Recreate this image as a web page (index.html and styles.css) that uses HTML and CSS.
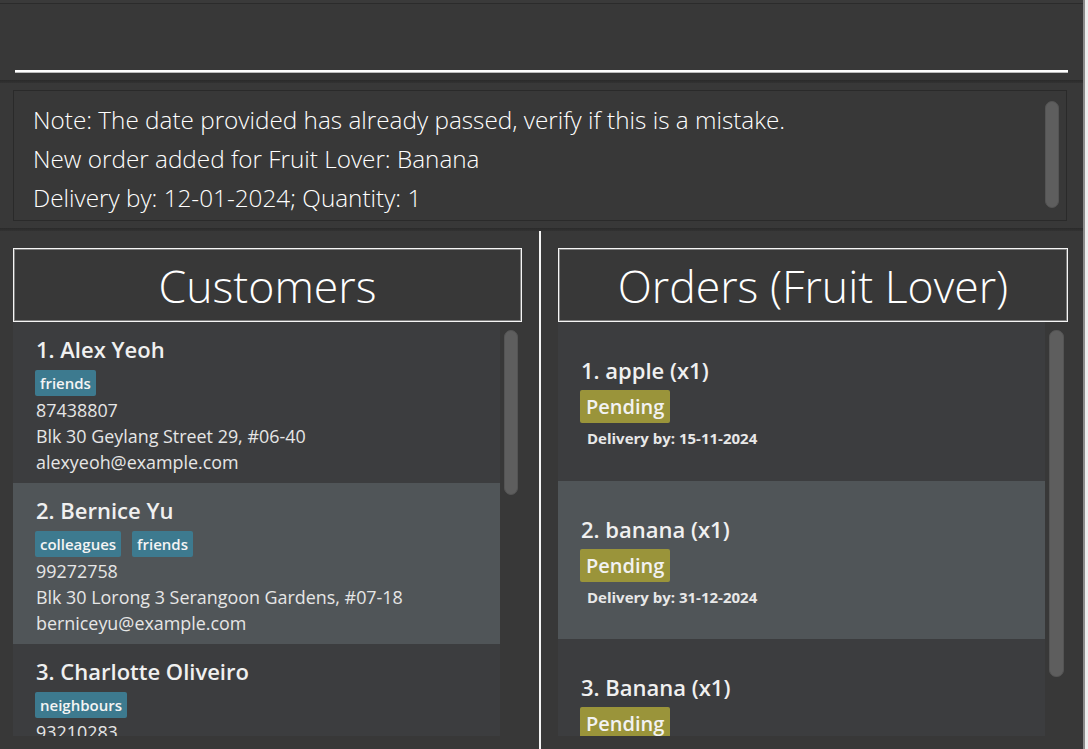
FILE: index.html
```html
<!DOCTYPE html>
<html lang="en">
<head>
<meta charset="utf-8">
<title>Fruit orders</title>
<link rel="stylesheet" href="styles.css">
</head>
<body>
<div class="window">
  <div class="app">
    <div class="topstrip"></div>
    <div class="command"><div class="command-field"></div></div>
    <div class="sep"></div>
    <div class="result-wrap">
      <div class="result">
        <div class="result-text">
          <p>Note: The date provided has already passed, verify if this is a mistake.</p>
          <p>New order added for Fruit Lover: Banana</p>
          <p>Delivery by: 12-01-2024; Quantity: 1</p>
        </div>
        <div class="result-track"><div class="thumb thumb-result"></div></div>
      </div>
    </div>
    <div class="sep"></div>
    <div class="panes">
      <section class="pane pane-left">
        <div class="pane-header">Customers</div>
        <div class="pane-body">
          <div class="list">
            <div class="cell person">
              <div class="name">1. Alex Yeoh</div>
              <div class="tags"><span class="tag">friends</span></div>
              <div class="line">87438807</div>
              <div class="line">Blk 30 Geylang Street 29, #06-40</div>
              <div class="line">alexyeoh@example.com</div>
            </div>
            <div class="cell person selected">
              <div class="name">2. Bernice Yu</div>
              <div class="tags"><span class="tag">colleagues</span><span class="tag">friends</span></div>
              <div class="line">99272758</div>
              <div class="line">Blk 30 Lorong 3 Serangoon Gardens, #07-18</div>
              <div class="line">berniceyu@example.com</div>
            </div>
            <div class="cell person">
              <div class="name">3. Charlotte Oliveiro</div>
              <div class="tags"><span class="tag">neighbours</span></div>
              <div class="line">93210283</div>
              <div class="line">Blk 11 Ang Mo Kio Street 74, #11-04</div>
              <div class="line">charlotte@example.com</div>
            </div>
          </div>
          <div class="track track-left"><div class="thumb thumb-left"></div></div>
        </div>
      </section>
      <div class="divider"></div>
      <section class="pane pane-right">
        <div class="pane-header">Orders (Fruit Lover)</div>
        <div class="pane-body">
          <div class="list">
            <div class="cell order">
              <div class="name">1. apple (x1)</div>
              <div class="tags"><span class="status">Pending</span></div>
              <div class="delivery">Delivery by: 15-11-2024</div>
            </div>
            <div class="cell order selected">
              <div class="name">2. banana (x1)</div>
              <div class="tags"><span class="status">Pending</span></div>
              <div class="delivery">Delivery by: 31-12-2024</div>
            </div>
            <div class="cell order">
              <div class="name">3. Banana (x1)</div>
              <div class="tags"><span class="status">Pending</span></div>
              <div class="delivery">Delivery by: 12-01-2024</div>
            </div>
          </div>
          <div class="track track-right"><div class="thumb thumb-right"></div></div>
        </div>
      </section>
    </div>
  </div>
  <div class="outside"></div>
</div>
</body>
</html>
```
FILE: styles.css
```css
* { box-sizing: border-box; }
html, body { margin: 0; padding: 0; }
body {
  width: 1088px;
  height: 749px;
  overflow: hidden;
  background: #383838;
  font-family: "Open Sans", "Noto Sans", sans-serif;
  color: #f2f2f2;
}
p { margin: 0; }

.window { display: flex; width: 1088px; height: 749px; }
.app {
  width: 1083px;
  height: 749px;
  display: flex;
  flex-direction: column;
  background: #383838;
  overflow: hidden;
}
.outside {
  width: 5px;
  height: 749px;
  background: #ededed;
  border-left: 2px solid #8c8c8c;
}

.topstrip {
  height: 4px;
  background: #3a3a3a;
  border-bottom: 1px solid #2b2b2b;
  flex: none;
}
.command {
  flex: none;
  height: 76px;
  padding: 0 15px 8px 15px;
}
.command-field {
  height: 68px;
  border-bottom: 2px solid #ffffff;
  box-shadow: 0 1px 0 #bdbdbd;
}
.sep {
  flex: none;
  height: 3px;
  background: linear-gradient(#2a2a2a, #323232);
}
.result-wrap {
  flex: none;
  height: 145px;
  padding: 7px 16px 7px 13px;
}
.result {
  height: 131px;
  border: 1px solid #2a2a2a;
  background: #383838;
  display: flex;
}
.result-text {
  flex: 1;
  padding: 9px 0 0 19px;
  font-weight: 300;
  font-size: 24.3px;
  line-height: 39px;
  color: #ffffff;
}
.result-track { width: 21px; padding: 10px 0 0 0; }
.thumb {
  background: #5e5e5e;
  border: 1px solid #545454;
  border-radius: 7px;
}
.thumb-result { width: 14px; height: 107px; }

.panes {
  flex: 1;
  display: flex;
  min-height: 0;
}
.pane {
  display: flex;
  flex-direction: column;
  min-height: 0;
}
.pane-left { width: 539px; padding: 17px 17px 13px 13px; }
.pane-right { width: 542px; padding: 17px 15px 13px 17px; }
.divider { width: 2px; background: #f5f5f5; flex: none; }

.pane-header {
  flex: none;
  height: 74px;
  border: 1px solid #f5f5f5;
  box-shadow: inset 0 0 0 1px #7d7d7d;
  text-align: center;
  font-weight: 300;
  font-size: 44.6px;
  line-height: 74px;
  color: #ffffff;
}
.pane-body {
  flex: 1;
  display: flex;
  min-height: 0;
}
.list {
  width: 487px;
  flex: none;
  background: #3c3d3f;
  overflow: hidden;
}
.track { flex: 1; padding: 8px 0 0 4px; }
.thumb-left { width: 14px; height: 165px; }
.thumb-right { width: 15px; height: 347px; }

.cell { background: #3c3d3f; padding-left: 22px; }
.cell.selected { background: #505558; }
.person { height: 161px; padding-top: 12px; }
.order { height: 159px; padding-top: 33px; }
.order.selected { height: 158px; }

.name {
  font-weight: 600;
  font-size: 22px;
  line-height: 30px;
  color: #f0f0f0;
  padding-left: 1px;
}
.tags { display: flex; gap: 11px; }
.person .tags { margin-top: 6px; margin-bottom: 1px; }
.tag {
  background: #3d7a8f;
  color: #f4f4f4;
  font-weight: 600;
  font-size: 15px;
  line-height: 18px;
  padding: 4px 5px;
  border-radius: 2px;
}
.line {
  font-size: 17.9px;
  line-height: 26px;
  color: #e6e6e6;
  padding-left: 1px;
}
.order .tags { margin-top: 5px; }
.status {
  background: #9a943a;
  color: #f2f2f2;
  font-weight: 600;
  font-size: 20px;
  line-height: 25px;
  padding: 4px 6px;
  border-radius: 2px;
}
.delivery {
  margin-top: 5px;
  padding-left: 7px;
  font-weight: 700;
  font-size: 15px;
  line-height: 20px;
  color: #e8e8e8;
}
```
